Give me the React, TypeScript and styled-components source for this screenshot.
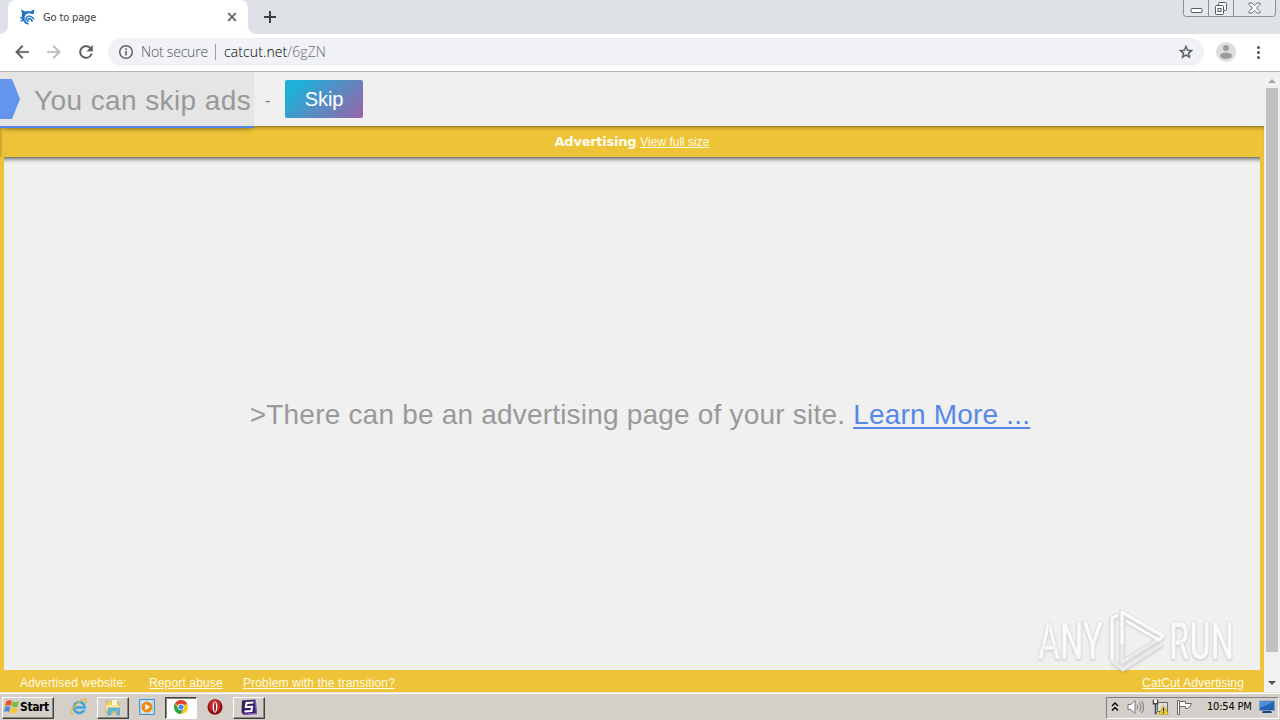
import React from 'react';
import styled, { createGlobalStyle, css } from 'styled-components';

const GlobalStyle = createGlobalStyle`
    * { box-sizing: border-box; }
    body {
        margin: 0;
        overflow: hidden;
        font-family: "Liberation Sans", Arial, sans-serif;
    }
    svg { display: block; flex: none; }
`;

const Screen = styled.div`
    width: 1280px;
    height: 720px;
    display: flex;
    flex-direction: column;
    overflow: hidden;
    background: #f0f0f0;
`;

/* ---------- browser chrome ---------- */

const TabStrip = styled.header`
    height: 34px;
    flex: none;
    display: flex;
    align-items: flex-start;
    background: #dee1e6;
`;

const TabCorner = styled.div<{ $side: 'left' | 'right' }>`
    width: 8px;
    height: 34px;
    background: radial-gradient(circle at ${({ $side }) => ($side === 'left' ? '0 26px' : '8px 26px')}, #dee1e6 7.5px, #fff 8px);
    clip-path: inset(26px 0 0 0);
`;

const Tab = styled.div`
    width: 240px;
    height: 34px;
    padding: 0 8px 0 12px;
    display: flex;
    align-items: center;
    background: #fff;
    border-radius: 8px 8px 0 0;
`;

const TabTitle = styled.span`
    flex: 1;
    margin: 1px 0 0 7px;
    font: 11px/16px "DejaVu Sans Condensed", "DejaVu Sans", sans-serif;
    font-stretch: condensed;
    letter-spacing: -0.15px;
    color: #3c4043;
    white-space: nowrap;
`;

const NewTab = styled.div`
    margin: 11px 0 0 8px;
`;

const WindowButtons = styled.div`
    margin-left: auto;
    margin-right: 4px;
    height: 17px;
    display: flex;
    border: 1px solid #8a8f9b;
    border-top: 0;
    border-radius: 0 0 4px 4px;
    overflow: hidden;
`;

const WindowButton = styled.div<{ $width: number }>`
    width: ${({ $width }) => $width}px;
    display: flex;
    align-items: center;
    justify-content: center;
    background: #e4e7ec;

    & + & { border-left: 1px solid #8a8f9b; }
`;

const Toolbar = styled.div`
    height: 38px;
    flex: none;
    display: flex;
    align-items: center;
    padding: 0 12px 1px 12px;
    background: #fff;
    border-bottom: 1px solid #b6b4b6;
`;

const NavIcons = styled.div`
    display: flex;
    gap: 12px;
    margin-right: 12px;
`;

const AddressBar = styled.div`
    width: 1096px;
    height: 28px;
    padding: 0 10px;
    display: flex;
    align-items: center;
    border-radius: 14px;
    background: #f0f2f5;
    font: 14px/20px "Open Sans", "Noto Sans", sans-serif;
    font-weight: 300;
    white-space: nowrap;
`;

const Security = styled.span`
    width: 74px;
    margin-left: 7px;
    color: #505458;
    letter-spacing: -0.2px;
`;

const Separator = styled.i`
    width: 1px;
    height: 16px;
    margin-right: 8px;
    background: #9a9da1;
`;

const Host = styled.span`
    color: #000;
    letter-spacing: 0.1px;
    flex: 1;

    small {
        font-size: inherit;
        color: #6a6e73;
    }
`;

const ToolbarEnd = styled.div`
    margin-left: 12px;
    display: flex;
    align-items: center;
    gap: 14px;
`;

/* ---------- page ---------- */

const Viewport = styled.main`
    height: 620px;
    flex: none;
    display: flex;
`;

const Page = styled.div`
    width: 1264px;
    display: flex;
    flex-direction: column;
    background: #f0f0f0;
`;

const SkipBar = styled.div`
    height: 54px;
    flex: none;
    display: flex;
    align-items: flex-start;
`;

const SkipTimer = styled.div`
    width: 254px;
    height: 56px;
    position: relative;
    z-index: 2;
    display: flex;
    align-items: center;
    background: #e5e5e5;
    border-bottom: 2px solid #5588e8;
    box-shadow: 0 5px 5px -4px rgba(0, 0, 0, 0.3);
`;

const Arrow = styled.div`
    width: 20px;
    height: 40px;
    background: #6495ed;
    clip-path: polygon(0 0, 12px 0, 100% 50%, 12px 100%, 0 100%);
`;

const headline = css`
    font-size: 28px;
    line-height: 32px;
    color: #999;
    white-space: nowrap;
`;

const SkipLabel = styled.span`
    ${headline}
    margin: 3px 0 0 14px;
    letter-spacing: 0.4px;
`;

const Dash = styled.span`
    width: 31px;
    padding: 20px 0 0 11px;
    font-size: 16px;
    line-height: 18px;
    color: #777;
`;

const SkipButton = styled.button`
    width: 78px;
    height: 38px;
    margin-top: 8px;
    padding: 0;
    border: 0;
    border-radius: 2px;
    background: linear-gradient(135deg, #1fafd8 15%, #9b62a8 100%);
    font: 20px/38px "Liberation Sans", sans-serif;
    letter-spacing: -0.15px;
    color: #fff;
`;

const AdHeader = styled.div`
    height: 31px;
    flex: none;
    position: relative;
    display: flex;
    align-items: center;
    justify-content: center;
    gap: 4px;
    background: #eec337;
    color: #fffdf0;
    box-shadow: inset 0 4px 4px -3px rgba(0, 0, 0, 0.5), inset 4px 0 3px -3px rgba(0, 0, 0, 0.2);

    b { font: bold 13px/16px "DejaVu Sans", sans-serif; letter-spacing: -0.25px; }
    a { margin-top: 1px; }
`;

const YellowLink = styled.a`
    font-size: 12px;
    line-height: 15px;
    color: #fffbe6;
    text-decoration: underline;
    text-underline-offset: 1px;
    white-space: nowrap;
`;

const AdFrame = styled.div`
    flex: 1;
    display: flex;
    align-items: center;
    justify-content: center;
    border: solid #eec337;
    border-width: 0 4px;
    box-shadow: inset 0 6px 4px -4px rgba(0, 0, 0, 0.6);
`;

const AdText = styled.p`
    ${headline}
    margin: 3px 0 0 16px;
    letter-spacing: 0.2px;

    a { color: #5588e8; text-decoration: underline; text-underline-offset: 3px; text-decoration-thickness: 2px; }
`;

const AdFooter = styled.footer`
    height: 22px;
    flex: none;
    display: flex;
    align-items: center;
    padding: 4px 20px 0;
    background: #eec337;
    color: #fffbe6;
    font-size: 12px;
    line-height: 15px;
    letter-spacing: 0.14px;
`;

const FooterItem = styled.span<{ $width?: number }>`
    width: ${({ $width }) => ($width ? `${$width}px` : 'auto')};
    white-space: nowrap;

    &:last-child { margin-left: auto; }
`;

const Scrollbar = styled.aside`
    width: 16px;
    display: flex;
    flex-direction: column;
    align-items: center;
    background: #f1f1f1;
`;

const Thumb = styled.div`
    width: 12px;
    height: 564px;
    margin-bottom: auto;
    background: #c1c1c1;
`;

const ScrollArrow = styled.div<{ $down?: boolean }>`
    width: 16px;
    height: ${({ $down }) => ($down ? 18 : 16)}px;
    display: flex;
    align-items: center;
    justify-content: center;

    &::before {
        content: '';
        border: 4px solid transparent;
        ${({ $down }) => ($down
        ? 'border-top-color: #505050; border-bottom: 0;'
        : 'border-bottom-color: #a3a3a3; border-top: 0; margin-top: 2px;')}
    }
`;

const Watermark = styled.svg`
    position: absolute;
    left: 1030px;
    top: 604px;
    filter: drop-shadow(0 1px 1px rgba(0, 0, 0, 0.16));
`;

/* ---------- taskbar ---------- */

const Taskbar = styled.footer`
    height: 28px;
    flex: none;
    display: flex;
    align-items: center;
    padding: 2px 1px 0 2px;
    background: #d4cfc8;
    border-top: 1px solid #e4e0d8;
    box-shadow: inset 0 1px 0 #fff;
    font: 11px/14px "DejaVu Sans Condensed", "DejaVu Sans", sans-serif;
    font-stretch: condensed;
`;

const raised = css`
    border: 1px solid;
    border-color: #fff #404040 #404040 #fff;
    box-shadow: inset -1px -1px 0 #8a8680;
`;

const pressed = css`
    border: 1px solid;
    border-color: #404040 #fff #fff #404040;
    box-shadow: inset 1px 1px 0 #8a8680;
    background: #fff;
`;

const StartButton = styled.button`
    ${raised}
    width: 52px;
    height: 22px;
    padding: 0 0 1px 1px;
    display: flex;
    align-items: center;
    gap: 0;
    background: #d4d0c8;
    font: bold 12px/14px "DejaVu Sans Condensed", "DejaVu Sans", sans-serif;
    font-stretch: condensed;
    letter-spacing: -0.4px;
    color: #000;
`;

const QuickLaunch = styled.div`
    display: flex;
    margin-left: 9px;
    gap: 2px;
`;

const TaskButton = styled.div<{ $state?: 'raised' | 'pressed' }>`
    width: 32px;
    height: 22px;
    display: flex;
    align-items: center;
    justify-content: center;
    padding-bottom: 1px;
    ${({ $state }) => $state === 'raised' && raised}
    ${({ $state }) => $state === 'pressed' && pressed}
`;

const Tray = styled.div`
    width: 173px;
    height: 22px;
    margin-left: auto;
    display: flex;
    align-items: center;
    gap: 7px;
    padding: 0 0 2px 4px;
    border: 1px solid;
    border-color: #808080 #fff #fff #808080;

    time {
        width: 45px;
        margin: 1px 0 0 7px;
        letter-spacing: -0.2px;
        white-space: nowrap;
        color: #000;
    }
`;

const TrayChevron = styled.svg`
    margin-right: 1px;
`;

/* ---------- icons ---------- */

const CatIcon = () => (
    <svg width="16" height="16" viewBox="0 0 16 16" fill="none" stroke="#1b77c4">
        <path d="M1 .3 4.800 2.600Q7.500 1.600 10.200 2.400L14.300.3 14 4.500 12.300 5.200Q9 3.300 6.500 5 4 7 4.800 10L2.200 9.500Q1.400 7 2 4.500Z" fill="#1b77c4" stroke="none" />
        <path d="M.3 8.500 3 9.500M.8 12 4 10.500M3.200 9Q4 13.800 8.500 15" strokeWidth="1.600" />
        <path d="M6.200 12Q5 8.500 8 7.300 11.500 6.500 14 10.500M8.200 13Q7 10 9 9.500 11.500 9.500 12.300 13" strokeWidth="1.400" />
    </svg>
);

const NavIcon = ({ d, color = '#5a5d61' }: { d: string; color?: string }) => (
    <svg width="20" height="20" viewBox="0 0 24 24" fill={color} stroke={color} strokeWidth=".4"><path d={d} /></svg>
);

const IeIcon = () => (
    <svg width="18" height="18" viewBox="0 0 18 18" fill="none">
        <path d="M14.200 12A5.500 5.500 0 1 1 14.800 9.500H5.500" stroke="#39a5e0" strokeWidth="2.600" />
        <path d="M4 15.500C1 17.500.5 15.500 2 12 4 7.500 10 2 14.500 1.300c2.500-.3 2 2.200.8 4" stroke="#e2b93c" strokeWidth="1.300" />
    </svg>
);

const FolderIcon = () => (
    <svg width="18" height="18" viewBox="0 0 18 18">
        <path d="M2 3h5l1 1.500h7V15H2Z" fill="#e8ce6c" stroke="#c9a944" strokeWidth=".6" />
        <path d="M8 2h5v5H8z" fill="#f7f3d2" />
        <path d="M2 7h13v5H2z" fill="#f8e99c" />
        <path d="M4 17v-6q0-1 1-1h9q1.500 0 1.500 1v6H13v-4H7v4Z" fill="#66b9e2" stroke="#3e8fbf" strokeWidth=".5" />
    </svg>
);

const MediaIcon = () => (
    <svg width="16" height="16" viewBox="0 0 16 16">
        <path d="M.5.5h15v15H.5z" fill="#b6d9f2" stroke="#4d91c6" />
        <path d="M3 2h10v12H3z" fill="#d9ecf8" />
        <circle cx="8" cy="8" r="5.500" fill="#f08a17" />
        <path d="m6.300 5 5 3-5 3Z" fill="#fff" />
    </svg>
);

const ChromeIcon = () => (
    <svg width="14" height="14" viewBox="0 0 14 14">
        <circle cx="7" cy="7" r="7" fill="#fbc51d" />
        <path d="M7 7 .94 3.500a7 7 0 0 1 12.120 0Z" fill="#e23e31" />
        <path d="M.94 3.500A7 7 0 0 0 6.500 14L9.800 8.500 7 7 4.200 8.500Z" fill="#2ca24c" />
        <circle cx="7" cy="7" r="3.300" fill="#fff" />
        <circle cx="7" cy="7" r="2.600" fill="#4287ef" />
    </svg>
);

const OperaIcon = () => (
    <svg width="16" height="16" viewBox="0 0 16 16">
        <ellipse cx="8" cy="8" rx="7.500" ry="7.700" fill="#8e1015" />
        <ellipse cx="7.600" cy="6.500" rx="6" ry="5.700" fill="#c4262b" />
        <ellipse cx="8" cy="8" rx="2.400" ry="5.800" fill="#fff" />
        <ellipse cx="8" cy="8" rx=".9" ry="4.900" fill="#8e1015" />
    </svg>
);

const PurpleIcon = () => (
    <svg width="16" height="16" viewBox="0 0 16 16">
        <path d="M1 1.500 14 .5l1.500 14L2 15.500.5 13Z" fill="#31215f" />
        <path d="m14 .5 1.500 14L2 15.500" fill="none" stroke="#8350bd" strokeWidth="1.500" />
        <path d="M12.500 3.500 5.500 4 4.800 8l6.300-.3-.6 4.300-7 .5" fill="none" stroke="#fff" strokeWidth="2" />
    </svg>
);

const FlagIcon = () => (
    <svg width="16" height="16" viewBox="0 0 16 16">
        <path d="M2.300 2.200Q5 .3 8 1.800L6.700 7Q4 5.500 1 7.200Z" fill="#e5532a" />
        <path d="M8.800 2.200Q11.500 4 15 2.300L13.700 7.500Q10.500 9 7.500 7.300Z" fill="#7dbb42" />
        <path d="M.8 8.200Q3.500 6.500 6.400 8L5.200 13Q2.500 11.500 0 13Z" fill="#4a8fd6" />
        <path d="M7.200 8.400Q10 10 13.400 8.600L12.200 13.600Q9 15.200 6 13.500Z" fill="#f4c62c" />
    </svg>
);

const TrayIcons = () => (
    <>
        <TrayChevron width="8" height="12" viewBox="0 0 8 12" fill="none" stroke="#000" strokeWidth="1.400"><path d="m1 5 3-3 3 3M1 9.500l3-3 3 3" /></TrayChevron>
        <svg width="18" height="16" viewBox="0 0 18 16" fill="none" stroke="#77777a">
            <path d="M1 5.500h3l4-4v13l-4-4H1Z" fill="#fff" />
            <path d="M10 5.500q2 2.500 0 5M12.300 3.500q3.500 4.500 0 9M14.500 2q4.500 6 0 12" />
        </svg>
        <svg width="17" height="16" viewBox="0 0 17 16">
            <path d="M5.500 3.500h10v9h-10z" fill="#ddd" stroke="#666" />
            <path d="M1.500.8v4h4v-4M3.500 5v9.500h4" fill="none" stroke="#444" strokeWidth="1.500" />
            <path d="M2.200 1h2.600v3H2.200zM5 14h4v1.500H5z" fill="#fff" />
            <path d="m11.500 6.500 4.800 8.800H6.700Z" fill="#f6d62e" stroke="#b99211" strokeWidth=".7" />
            <path d="M11.500 9v3.500m0 .8v1.200" stroke="#222" strokeWidth="1.200" />
        </svg>
        <svg width="17" height="16" viewBox="0 0 17 16" fill="#fff" stroke="#66666a">
            <path d="M1.500 1.500h2v14h-2z" />
            <path d="M3.500 2.500h6v2h6q-1 4-4 5H9.500v-2h-6Z" />
        </svg>
    </>
);

const App = () => {
    return (
        <>
            <GlobalStyle />
            <Screen>
                <TabStrip>
                    <TabCorner $side="left" />
                    <Tab>
                        <CatIcon />
                        <TabTitle>Go to page</TabTitle>
                        <svg width="16" height="16" viewBox="0 0 16 16" stroke="#5f6368" strokeWidth="1.700"><path d="m4.200 4.200 7.600 7.600m0-7.600-7.600 7.600" /></svg>
                    </Tab>
                    <TabCorner $side="right" />
                    <NewTab>
                        <svg width="12" height="12" viewBox="0 0 12 12" stroke="#3c4043" strokeWidth="2"><path d="M6 0v12M0 6h12" /></svg>
                    </NewTab>
                    <WindowButtons>
                        <WindowButton $width={24}>
                            <svg width="13" height="16" viewBox="0 0 13 16"><rect x="1" y="8.500" width="11" height="4" rx="1" fill="#fff" stroke="#555b68" /></svg>
                        </WindowButton>
                        <WindowButton $width={25}>
                            <svg width="14" height="15" viewBox="0 0 14 15" fill="#fff" stroke="#555b68">
                                <rect x="4.500" y="1.500" width="8" height="8" rx="1" />
                                <rect x="1.500" y="4.500" width="8" height="9" rx="1" />
                                <rect x="4" y="7.500" width="3" height="3" />
                            </svg>
                        </WindowButton>
                        <WindowButton $width={42}>
                            <svg width="13" height="12" viewBox="0 0 13 12"><path d="M1 1h3l2.500 2.500L9 1h3v1.500L8.500 6 12 9.500V11H9L6.500 8.500 4 11H1V9.500L4.500 6 1 2.500Z" fill="#fff" stroke="#555b68" strokeWidth=".9" /></svg>
                        </WindowButton>
                    </WindowButtons>
                </TabStrip>

                <Toolbar>
                    <NavIcons>
                        <NavIcon d="M20 11H7.830l5.590-5.590L12 4l-8 8 8 8 1.410-1.410L7.830 13H20v-2z" />
                        <NavIcon color="#babcbe" d="m12 4-1.410 1.410L16.170 11H4v2h12.170l-5.580 5.590L12 20l8-8z" />
                        <NavIcon d="M17.650 6.350A7.958 7.958 0 0 0 12 4a8 8 0 1 0 7.730 10h-2.080A5.990 5.990 0 0 1 12 18a6 6 0 1 1 0-12c1.660 0 3.140.69 4.220 1.780L13 11h7V4l-2.350 2.350z" />
                    </NavIcons>
                    <AddressBar>
                        <svg width="16" height="16" viewBox="0 0 16 16" fill="none" stroke="#5f6368" strokeWidth="1.500"><circle cx="8" cy="8" r="6.300" /><path d="M8 7v4.500M8 4.300v1.600" strokeWidth="1.600" /></svg>
                        <Security>Not secure</Security>
                        <Separator />
                        <Host>catcut.net<small>/6gZN</small></Host>
                        <svg width="16" height="16" viewBox="0 0 24 24" fill="#55595e"><path d="M22.500 9.200l-7.500-.65L12 1.500 9 8.560l-7.500.64 5.700 4.940L5.500 21.500 12 17.600l6.500 3.900-1.700-7.370zM12 15.400l-3.760 2.270 1-4.280-3.320-2.880 4.380-.38L12 6.100l1.710 4.040 4.380.38-3.320 2.880 1 4.280z" stroke="#55595e" strokeWidth=".4" /></svg>
                    </AddressBar>
                    <ToolbarEnd>
                        <svg width="20" height="20" viewBox="0 0 20 20"><circle cx="10" cy="10" r="10" fill="#dedede" /><circle cx="10" cy="6" r="3" fill="#9b9c9e" /><ellipse cx="10" cy="13.800" rx="6" ry="3.200" fill="#9b9c9e" /></svg>
                        <svg width="16" height="16" viewBox="0 0 16 16" fill="#505357"><circle cx="8.500" cy="3.500" r="1.500" /><circle cx="8.500" cy="8.500" r="1.500" /><circle cx="8.500" cy="13.500" r="1.500" /></svg>
                    </ToolbarEnd>
                </Toolbar>

                <Viewport>
                    <Page>
                        <SkipBar>
                            <SkipTimer>
                                <Arrow />
                                <SkipLabel>You can skip ads</SkipLabel>
                            </SkipTimer>
                            <Dash>-</Dash>
                            <SkipButton>Skip</SkipButton>
                        </SkipBar>
                        <AdHeader>
                            <b>Advertising</b>
                            <YellowLink>View full size</YellowLink>
                        </AdHeader>
                        <AdFrame>
                            <AdText>&gt;There can be an advertising page of your site. <a>Learn More ...</a></AdText>
                        </AdFrame>
                        <AdFooter>
                            <FooterItem $width={129}>Advertised website:</FooterItem>
                            <FooterItem $width={94}><YellowLink>Report abuse</YellowLink></FooterItem>
                            <FooterItem><YellowLink>Problem with the transition?</YellowLink></FooterItem>
                            <FooterItem><YellowLink>CatCut Advertising</YellowLink></FooterItem>
                        </AdFooter>
                    </Page>
                    <Scrollbar>
                        <ScrollArrow />
                        <Thumb />
                        <ScrollArrow $down />
                    </Scrollbar>
                </Viewport>

                <Taskbar>
                    <StartButton><FlagIcon />Start</StartButton>
                    <QuickLaunch>
                        <TaskButton><IeIcon /></TaskButton>
                        <TaskButton $state="raised"><FolderIcon /></TaskButton>
                        <TaskButton><MediaIcon /></TaskButton>
                        <TaskButton $state="pressed"><ChromeIcon /></TaskButton>
                        <TaskButton><OperaIcon /></TaskButton>
                        <TaskButton $state="raised"><PurpleIcon /></TaskButton>
                    </QuickLaunch>
                    <Tray>
                        <TrayIcons />
                        <time>10:54 PM</time>
                        <svg width="16" height="14" viewBox="0 0 16 14"><path d="M.5 1h15v9.500H.5z" fill="#2464b4" stroke="#7f9fc5" /><path d="M1 1.500h14L1 8Z" fill="#4c91d8" /><path d="M4 11h8l1 2H3Z" fill="#1d4273" /></svg>
                    </Tray>
                </Taskbar>
            </Screen>

            <Watermark width="250" height="76" viewBox="0 0 250 76" fill="none">
                <g fill="#fafafa" stroke="#dcdcdc" strokeWidth=".6" fontFamily="Roboto, sans-serif" fontSize="51" fontWeight="500">
                    <text x="8" y="55" textLength="65" lengthAdjust="spacingAndGlyphs">ANY</text>
                    <text x="139" y="55" textLength="65" lengthAdjust="spacingAndGlyphs">RUN</text>
                </g>
                <g strokeLinejoin="round">
                    <path d="M82 56V14l6-3M92 50V8l40 25-40 25ZM82 57l11 8 39-25" stroke="#dedede" strokeWidth="5" />
                    <path d="M82 57l11 8 39-25M92 38v20l40-25" stroke="#ebebeb" strokeWidth="3" />
                    <path d="M82 56V14l6-3M92 40V8l41 24-4 4-33-19" stroke="#fbfbfb" strokeWidth="3" />
                </g>
            </Watermark>
        </>
    )
}

export default App;
